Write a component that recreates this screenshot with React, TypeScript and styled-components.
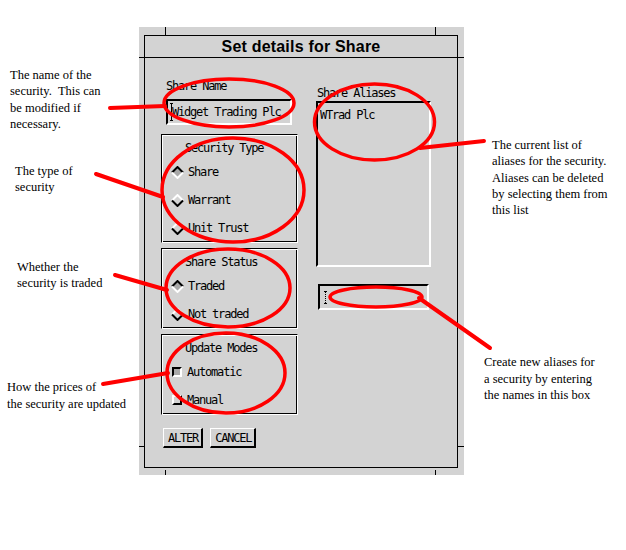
import React from "react";
import styled, { createGlobalStyle } from "styled-components";

const Global = createGlobalStyle`
  html, body { margin: 0; padding: 0; background: #ffffff; }
  #root { width: 626px; height: 550px; }
`;

const MONO = `"DejaVu Sans Mono", "Liberation Mono", monospace`;
const GRAY = "#d3d3d3";

const Page = styled.div`
  position: relative;
  width: 626px;
  height: 550px;
  display: flex;
  align-items: flex-start;
  background: #ffffff;
  overflow: hidden;
`;

const NoteColumn = styled.div<{ $width: number }>`
  width: ${(p) => p.$width}px;
  flex: none;
  display: flex;
  flex-direction: column;
`;

const Note = styled.p<{ $top: number; $indent: number }>`
  margin: ${(p) => p.$top}px 0 0 ${(p) => p.$indent}px;
  font-family: "Liberation Serif", "Times New Roman", serif;
  font-size: 12.5px;
  line-height: 16.3px;
  color: #000;
  white-space: pre;
`;

const Dialog = styled.div`
  position: relative;
  flex: none;
  margin-top: 27px;
  width: 325px;
  height: 448px;
  box-sizing: border-box;
  padding: 8px 6px 7px 5px;
  background: ${GRAY};
`;

const Tick = styled.span<{ $x: number; $y: number; $w: number; $h: number }>`
  position: absolute;
  left: ${(p) => p.$x}px;
  top: ${(p) => p.$y}px;
  width: ${(p) => p.$w}px;
  height: ${(p) => p.$h}px;
  background: #000;
`;

const Window = styled.div`
  height: 100%;
  box-sizing: border-box;
  border: 1px solid #000;
  display: flex;
  flex-direction: column;
`;

const TitleBar = styled.div`
  height: 21px;
  flex: none;
  border-bottom: 1px solid #000;
  display: flex;
  align-items: center;
  justify-content: center;
  font-family: "Liberation Sans", Arial, sans-serif;
  font-weight: bold;
  font-size: 16px;
  letter-spacing: 0.2px;
  color: #000;
`;

const Content = styled.div`
  flex: 1;
  display: flex;
  align-items: flex-start;
  gap: 18px;
  padding-left: 16px;
`;

const LeftColumn = styled.div`
  width: 137px;
  margin-top: 20px;
  display: flex;
  flex-direction: column;
`;

const RightColumn = styled.div`
  margin-top: 27px;
  display: flex;
  flex-direction: column;
`;

const Label = styled.div<{ $indent?: number }>`
  font-family: ${MONO};
  font-size: 12px;
  letter-spacing: -1.2px;
  line-height: 16px;
  height: 16px;
  color: #000;
  padding-left: ${(p) => p.$indent ?? 0}px;
  white-space: nowrap;
`;

const Sunken = styled.div<{ $w: number; $h: number; $mt: number; $ml?: number }>`
  position: relative;
  box-sizing: border-box;
  width: ${(p) => p.$w}px;
  height: ${(p) => p.$h}px;
  margin-top: ${(p) => p.$mt}px;
  margin-left: ${(p) => p.$ml ?? 0}px;
  border-style: solid;
  border-width: 2px;
  border-color: #000 #fff #fff #000;
  background: ${GRAY};
  font-family: ${MONO};
  font-size: 12px;
  letter-spacing: -1.2px;
  color: #000;
  white-space: nowrap;
`;

const FieldText = styled.div`
  line-height: 22px;
  padding-left: 4px;
`;

const ListItem = styled.div`
  line-height: 16px;
  padding: 4px 0 0 2px;
`;

const IBeam = styled.span<{ $x: number; $y: number; $h: number; $dotted?: boolean }>`
  position: absolute;
  left: ${(p) => p.$x}px;
  top: ${(p) => p.$y}px;
  width: 3px;
  height: ${(p) => p.$h}px;
  border-top: 1px solid #000;
  border-bottom: 1px solid #000;
  box-sizing: border-box;
  &::after {
    content: "";
    position: absolute;
    left: 1px;
    top: 0;
    bottom: 0;
    width: 1px;
    background: ${(p) =>
      p.$dotted
        ? "repeating-linear-gradient(to bottom, #000 0 1px, transparent 1px 2px)"
        : "#000"};
  }
`;

const NameBlock = styled.div`
  padding-left: 5px;
  display: flex;
  flex-direction: column;
`;

const Group = styled.div<{ $mt: number; $h: number }>`
  box-sizing: border-box;
  height: ${(p) => p.$h}px;
  margin-top: ${(p) => p.$mt}px;
  border: 1px solid;
  border-color: #000 #fff #fff #000;
  box-shadow: inset 1px 1px 0 #fff, inset -1px -1px 0 #000;
  padding-top: 3px;
  display: flex;
  flex-direction: column;
`;

const GroupTitle = styled.div`
  font-family: ${MONO};
  font-size: 12px;
  letter-spacing: -1.2px;
  line-height: 20px;
  height: 20px;
  padding-left: 23px;
  color: #000;
  white-space: nowrap;
`;

const Option = styled.div`
  height: 28px;
  display: flex;
  align-items: center;
  gap: 4px;
  padding-left: 9px;
  font-family: ${MONO};
  font-size: 12px;
  letter-spacing: -1.2px;
  color: #000;
  white-space: nowrap;
`;

const Check = styled.span<{ $on: boolean }>`
  width: 10px;
  height: 10px;
  margin: 0 1px 0 1px;
  box-sizing: border-box;
  border-style: solid;
  border-width: 2px;
  border-color: ${(p) => (p.$on ? "#000 #fff #fff #000" : "#fff #000 #000 #fff")};
  background: ${(p) => (p.$on ? "#a8a8a8" : GRAY)};
`;

const ButtonRow = styled.div`
  display: flex;
  gap: 7px;
  margin-top: 13px;
  padding-left: 2px;
`;

const Button = styled.button`
  height: 20px;
  box-sizing: border-box;
  padding: 0 3px 0 4px;
  border-style: solid;
  border-width: 1px 2px 2px 1px;
  border-color: #fff #000 #000 #fff;
  background: ${GRAY};
  font-family: ${MONO};
  font-size: 12px;
  letter-spacing: -1.2px;
  line-height: 16px;
  color: #000;
  border-radius: 0;
`;

const Overlay = styled.svg`
  position: absolute;
  left: 0;
  top: 0;
  pointer-events: none;
`;

function Radio({ on }: { on: boolean }) {
  const top = on ? "#000" : "#fff";
  const bottom = on ? "#fff" : "#000";
  return (
    <svg width="13" height="13" viewBox="0 0 13 13">
      <polygon points="6.5,1 12,6.5 6.5,12 1,6.5" fill={on ? "#a8a8a8" : GRAY} />
      <polyline points="1,6.5 6.5,1 12,6.5" stroke={top} strokeWidth="2" fill="none" />
      <polyline points="12,6.5 6.5,12 1,6.5" stroke={bottom} strokeWidth="2" fill="none" />
    </svg>
  );
}

const leftNotes = [
  { top: 67, indent: 10, text: "The name of the\nsecurity.  This can\nbe modified if\nnecessary." },
  { top: 31, indent: 15, text: "The type of\nsecurity" },
  { top: 63, indent: 17, text: "Whether the\nsecurity is traded" },
  { top: 88, indent: 7, text: "How the prices of\nthe security are updated" },
];

const rightNotes = [
  {
    top: 137,
    indent: 28,
    text: "The current list of\naliases for the security.\nAliases can be deleted\nby selecting them from\nthis list",
  },
  { top: 136, indent: 20, text: "Create new aliases for\na security by entering\nthe names in this box" },
];

export default function App() {
  return (
    <>
      <Global />
      <Page>
        <NoteColumn $width={139}>
          {leftNotes.map((n, i) => (
            <Note key={i} $top={n.top} $indent={n.indent}>
              {n.text}
            </Note>
          ))}
        </NoteColumn>

        <Dialog>
          <Tick $x={26} $y={0} $w={1} $h={8} />
          <Tick $x={296} $y={0} $w={1} $h={8} />
          <Tick $x={0} $y={30} $w={5} $h={1} />
          <Tick $x={319} $y={30} $w={6} $h={1} />
          <Tick $x={0} $y={419} $w={5} $h={1} />
          <Tick $x={319} $y={419} $w={6} $h={1} />
          <Tick $x={26} $y={443} $w={1} $h={5} />
          <Tick $x={296} $y={443} $w={1} $h={5} />
          <Window>
            <TitleBar>Set details for Share</TitleBar>
            <Content>
              <LeftColumn>
                <NameBlock>
                  <Label>Share Name</Label>
                  <Sunken $w={126} $h={26} $mt={5}>
                    <FieldText>Widget Trading Plc</FieldText>
                    <IBeam $x={2} $y={2} $h={18} />
                  </Sunken>
                </NameBlock>

                <Group $mt={9} $h={109}>
                  <GroupTitle>Security Type</GroupTitle>
                  <Option>
                    <Radio on={true} />
                    Share
                  </Option>
                  <Option>
                    <Radio on={false} />
                    Warrant
                  </Option>
                  <Option>
                    <Radio on={false} />
                    Unit Trust
                  </Option>
                </Group>

                <Group $mt={5} $h={81}>
                  <GroupTitle>Share Status</GroupTitle>
                  <Option>
                    <Radio on={true} />
                    Traded
                  </Option>
                  <Option>
                    <Radio on={false} />
                    Not traded
                  </Option>
                </Group>

                <Group $mt={5} $h={81}>
                  <GroupTitle>Update Modes</GroupTitle>
                  <Option>
                    <Check $on={true} />
                    Automatic
                  </Option>
                  <Option>
                    <Check $on={false} />
                    Manual
                  </Option>
                </Group>

                <ButtonRow>
                  <Button>ALTER</Button>
                  <Button>CANCEL</Button>
                </ButtonRow>
              </LeftColumn>

              <RightColumn>
                <Label $indent={1}>Share Aliases</Label>
                <Sunken $w={115} $h={166} $mt={0}>
                  <ListItem>WTrad Plc</ListItem>
                </Sunken>
                <Sunken $w={111} $h={26} $mt={17} $ml={2}>
                  <IBeam $x={4} $y={5} $h={13} $dotted />
                </Sunken>
              </RightColumn>
            </Content>
          </Window>
        </Dialog>

        <NoteColumn $width={162}>
          {rightNotes.map((n, i) => (
            <Note key={i} $top={n.top} $indent={n.indent}>
              {n.text}
            </Note>
          ))}
        </NoteColumn>

        <Overlay width="626" height="550" viewBox="0 0 626 550">
          <g stroke="#ff0000" fill="none" strokeWidth="3.5">
            <ellipse cx="229" cy="103" rx="65" ry="24" />
            <ellipse cx="374.5" cy="122" rx="60" ry="38" />
            <ellipse cx="233" cy="190" rx="71" ry="52" />
            <ellipse cx="228" cy="288" rx="62" ry="39" />
            <ellipse cx="226" cy="373" rx="59" ry="40" />
            <ellipse cx="376" cy="297" rx="46" ry="10" />
          </g>
          <g stroke="#ff0000" strokeWidth="4" strokeLinecap="round">
            <line x1="110" y1="108" x2="165" y2="106" />
            <line x1="96" y1="174" x2="163" y2="197" />
            <line x1="115" y1="275" x2="167" y2="290" />
            <line x1="103" y1="384" x2="168" y2="373" />
            <line x1="420" y1="148" x2="484" y2="141" />
            <line x1="419" y1="298" x2="490" y2="348" />
          </g>
        </Overlay>
      </Page>
    </>
  );
}
